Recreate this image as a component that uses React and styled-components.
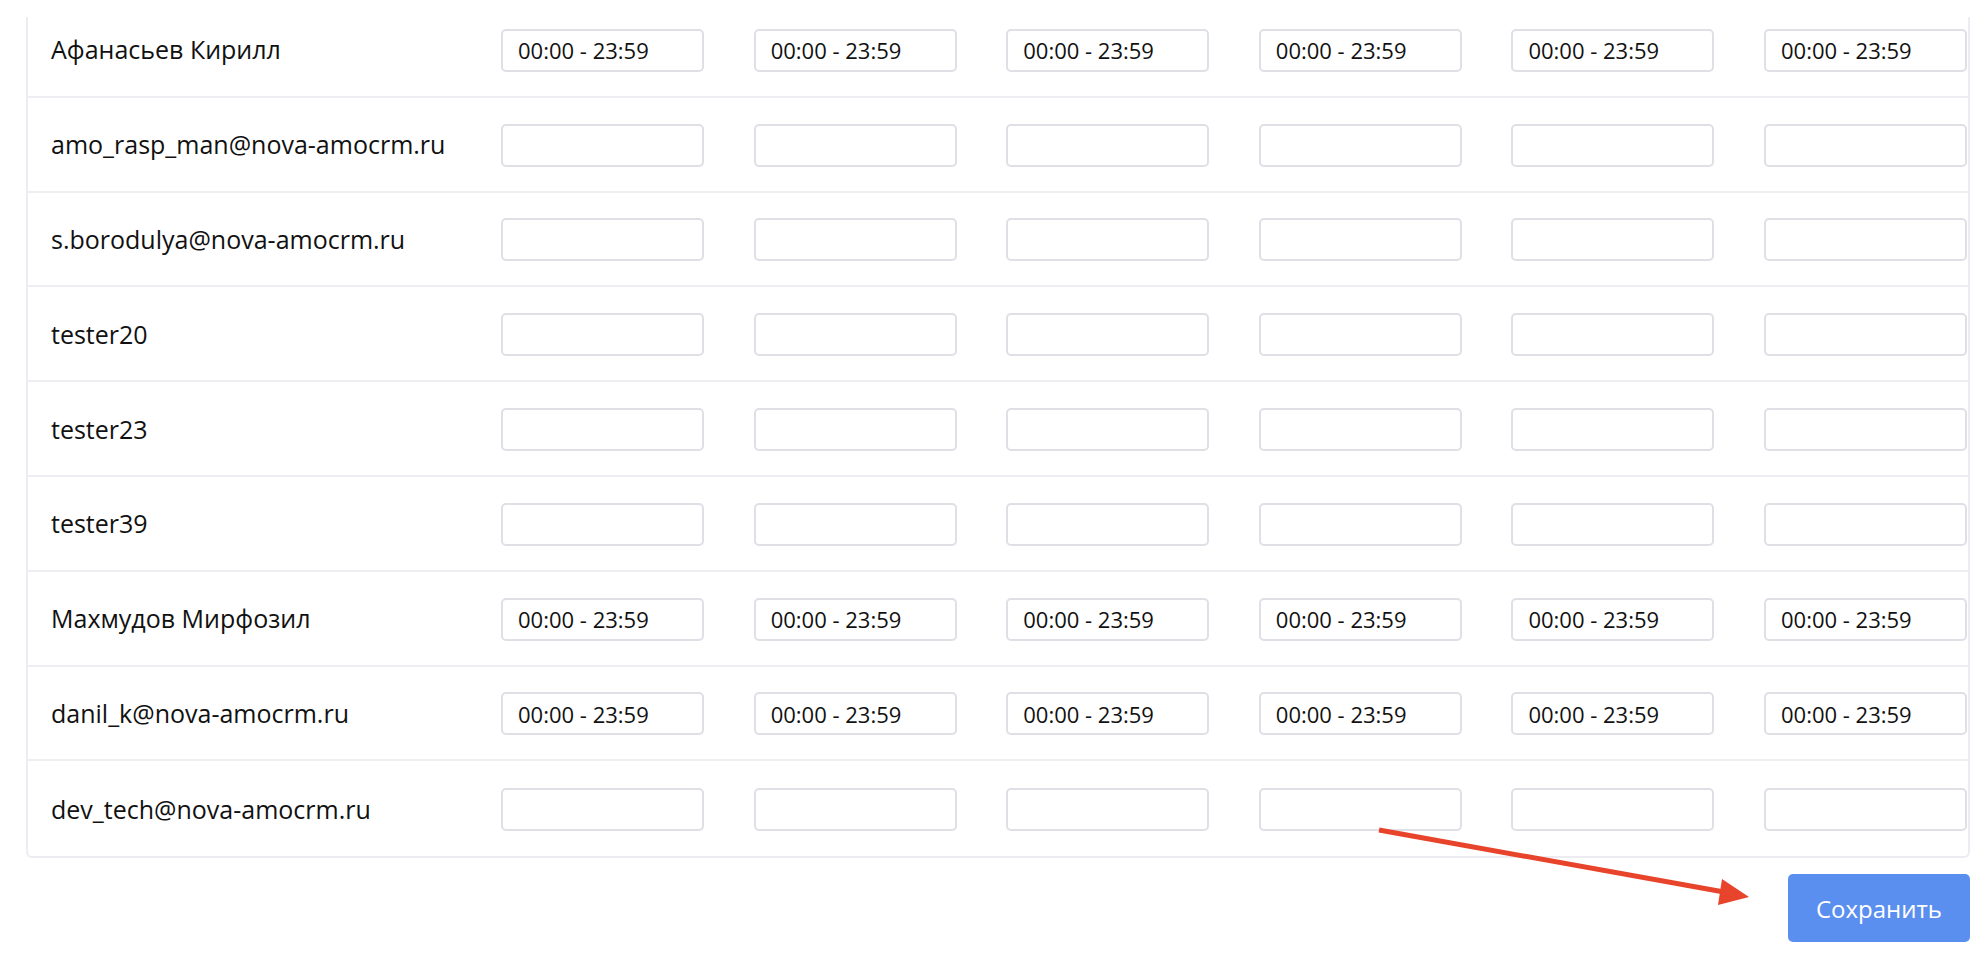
import React from "react";
import styled, { createGlobalStyle } from "styled-components";

const GlobalStyle = createGlobalStyle`
  html, body {
    margin: 0;
    background: #ffffff;
  }
  body {
    font-family: "Open Sans", "Noto Sans", sans-serif;
    color: #111111;
  }
`;

const users = [
  { name: "Афанасьев Кирилл", time: "00:00 - 23:59" },
  { name: "amo_rasp_man@nova-amocrm.ru", time: "" },
  { name: "s.borodulya@nova-amocrm.ru", time: "" },
  { name: "tester20", time: "" },
  { name: "tester23", time: "" },
  { name: "tester39", time: "" },
  { name: "Махмудов Мирфозил", time: "00:00 - 23:59" },
  { name: "danil_k@nova-amocrm.ru", time: "00:00 - 23:59" },
  { name: "dev_tech@nova-amocrm.ru", time: "" },
];

const days = [0, 1, 2, 3, 4, 5];

export default function App() {
  return (
    <>
      <GlobalStyle />
      <Page>
        <Card>
          <Rows>
            {users.map((u, i) => (
              <Row key={u.name} $last={i === users.length - 1}>
                <Name>{u.name}</Name>
                {days.map((d) => (
                  <TimeInput key={d} defaultValue={u.time} />
                ))}
              </Row>
            ))}
          </Rows>
        </Card>
        <Footer>
          <SaveButton>Сохранить</SaveButton>
        </Footer>
        <Pointer viewBox="0 0 1980 978" width="1980" height="978">
          <line x1="1379" y1="830" x2="1724" y2="892" stroke="#e8432b" strokeWidth="5" />
          <polygon points="1722,879 1718,905 1749,897" fill="#e8432b" />
        </Pointer>
      </Page>
    </>
  );
}

const Page = styled.div`
  position: relative;
  width: 1980px;
  height: 978px;
  box-sizing: border-box;
  padding: 17px 10px 0 26px;
  overflow: hidden;
`;

const Card = styled.div`
  border: 2px solid #ececf2;
  border-top: none;
  border-radius: 0 0 6px 6px;
  overflow: hidden;
  background: #ffffff;
`;

/* list is scrolled a little, so the first row is cut at the top */
const Rows = styled.div`
  margin-top: -14px;
`;

const Row = styled.div`
  display: grid;
  grid-template-columns: 1fr repeat(6, 203px);
  column-gap: 49.6px;
  align-items: center;
  height: 94.8px;
  box-sizing: border-box;
  padding: 0 1px 0 23px;
  border-bottom: ${(p) => (p.$last ? "none" : "2px solid #ededf2")};
`;

const Name = styled.div`
  font-size: 25px;
  white-space: nowrap;
  color: #111111;
`;

const TimeInput = styled.input`
  box-sizing: border-box;
  width: 203px;
  height: 43px;
  margin-top: 2px;
  padding: 0 15px;
  border: 2px solid #dfdfe6;
  border-radius: 5px;
  background: #ffffff;
  font-family: "Open Sans", "Noto Sans", sans-serif;
  font-size: 22px;
  color: #111111;
  outline: none;
`;

const Footer = styled.div`
  display: flex;
  justify-content: flex-end;
  margin-top: 16px;
`;

const SaveButton = styled.button`
  width: 182px;
  height: 68px;
  border: none;
  border-radius: 5px;
  background: #5a8eef;
  color: #ffffff;
  font-family: "Open Sans", "Noto Sans", sans-serif;
  font-size: 24px;
  cursor: pointer;
`;

const Pointer = styled.svg`
  position: absolute;
  top: 0;
  left: 0;
  pointer-events: none;
`;
